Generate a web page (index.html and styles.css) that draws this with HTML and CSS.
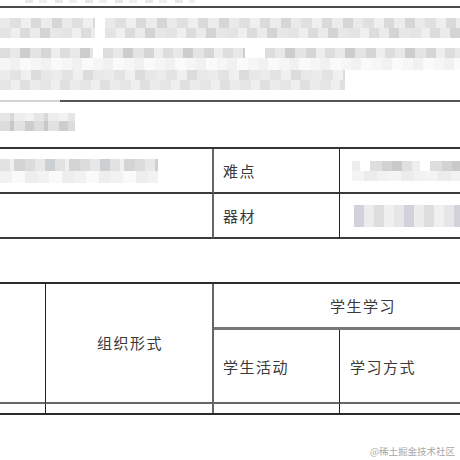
FILE: index.html
```html
<!DOCTYPE html>
<html lang="zh">
<head>
<meta charset="utf-8">
<link rel="stylesheet" href="styles.css">
</head>
<body>
<div class="page">
  <div class="faint"></div>
  <div class="topline"></div>
  <div class="para">
    <div class="bl row-a"><span class="seg s1"></span><span class="seg s2"></span></div>
    <div class="bl row-b"><span class="seg s1"></span><span class="seg s3"></span><span class="seg s4"></span></div>
    <div class="bl row-b2"></div>
    <div class="bl row-c"><span class="seg s5"></span></div>
  </div>
  <div class="rule"></div>
  <div class="short"></div>

  <div class="t1">
    <div class="c c1"><span class="blk b-left"></span></div>
    <div class="c c2"><span class="lbl">难点</span></div>
    <div class="c c3"><span class="blk b-right"></span></div>
    <div class="c c1"></div>
    <div class="c c2"><span class="lbl">器材</span></div>
    <div class="c c3"><span class="blk b-right2"></span></div>
  </div>

  <div class="t2">
    <div class="h h0"></div>
    <div class="h h1"><span class="lbl">组织形式</span></div>
    <div class="h h2"><span class="lbl">学生学习</span></div>
    <div class="h h3"><span class="lbl">学生活动</span></div>
    <div class="h h4"><span class="lbl">学习方式</span></div>
    <div class="f f0"></div>
    <div class="f f1"></div>
    <div class="f f2"></div>
    <div class="f f3"></div>
  </div>

  <div class="wm">@稀土掘金技术社区</div>
</div>
</body>
</html>
```

FILE: styles.css
```css
html, body {
  margin: 0;
  padding: 0;
  background: #fff;
  overflow: hidden;
}
.page {
  width: 460px;
  height: 460px;
  overflow: hidden;
  font-family: "Noto Sans CJK SC", "Noto Sans", sans-serif;
  color: #333;
  display: flex;
  flex-direction: column;
}
.faint {
  height: 3px;
  margin-left: 25px;
  width: 170px;
  background: repeating-linear-gradient(90deg, #e8e8e8 0 8px, #fff 8px 14px, #efefef 14px 22px, #fff 22px 30px);
}
.topline {
  margin-top: 3px;
  height: 2px;
  background: #4a4a4a;
}
.para {
  margin-top: 10px;
  display: flex;
  flex-direction: column;
}
.bl { display: flex; }
.seg { display: block; height: 100%; }
.row-a { height: 20px; }
.row-a .s1 { width: 95px; }
.row-a .s2 { width: 355px; margin-left: 10px; }
.row-b { height: 10px; margin-top: 10px; }
.row-b .s1 { width: 95px; }
.row-b .s3 { width: 145px; margin-left: 10px; }
.row-b .s4 { width: 200px; margin-left: 20px; }
.row-b2 {
  height: 12px;
  background: repeating-linear-gradient(90deg, #f6f6f6 0 10px, #f1f1f1 10px 20px, #fafafa 20px 31px);
}
.row-c { height: 20px; }
.row-c .s5 { width: 345px; }

.row-a .seg {
  background:
    repeating-linear-gradient(90deg, #eaeaea 0 10px, #e0e0e0 10px 21px, #efefef 21px 31px, #dadada 31px 41px, #ececec 41px 52px, #d6d6d6 52px 62px) top / 100% 10px no-repeat,
    repeating-linear-gradient(90deg, #e4e4e4 0 11px, #efefef 11px 20px, #dcdcdc 20px 30px, #ebebeb 30px 40px, #d4d4d4 40px 50px, #e7e7e7 50px 61px) bottom / 100% 10px no-repeat;
}
.row-b .seg {
  background: repeating-linear-gradient(90deg, #dddddd 0 10px, #e8e8e8 10px 20px, #cdcdcd 20px 30px, #e4e4e4 30px 41px, #d6d6d6 41px 51px, #eeeeee 51px 60px);
}
.row-c .seg {
  background:
    repeating-linear-gradient(90deg, #ececec 0 10px, #e3e3e3 10px 21px, #f0f0f0 21px 31px, #dcdcdc 31px 41px, #e8e8e8 41px 52px) top / 100% 10px no-repeat,
    repeating-linear-gradient(90deg, #e6e6e6 0 11px, #efefef 11px 20px, #e0e0e0 20px 30px, #ececec 30px 40px) bottom / 100% 10px no-repeat;
}
.rule {
  margin-top: 10px;
  height: 2px;
  background: linear-gradient(90deg, #d4d4d4 0 60px, #555 60px);
}
.short {
  margin-top: 11px;
  width: 75px;
  height: 18px;
  background:
    repeating-linear-gradient(90deg, #e6e6e6 0 10px, #d8d8d8 10px 14px, #ededed 14px 25px, #f2f2f2 25px 34px) top / 100% 8px no-repeat,
    repeating-linear-gradient(90deg, #dcdcdc 0 10px, #c8c8c8 10px 14px, #e2e2e2 14px 25px, #cdcdcd 25px 34px) bottom / 100% 10px no-repeat;
}

.lbl {
  font-size: 15px;
  letter-spacing: 1.5px;
  color: #3a3a3a;
  white-space: nowrap;
}

.t1 {
  margin-top: 16px;
  margin-left: -10px;
  width: 520px;
  display: grid;
  grid-template-columns: 224px 126px 170px;
  grid-template-rows: 45px 45px;
  border-top: 2px solid #333;
}
.t1 .c {
  border-bottom: 2px solid #3a3a3a;
  display: flex;
  align-items: center;
  box-sizing: border-box;
}
.t1 .c1 { border-right: 2px solid #666; }
.t1 .c2 { border-right: 1px solid #222; padding-left: 9px; }
.blk { display: block; }
.b-left {
  margin-left: 10px;
  width: 158px;
  height: 24px;
  background:
    repeating-linear-gradient(90deg, #e2e2e2 0 10px, #f0f0f0 10px 14px, #d4d4d4 14px 25px, #dcdcdc 25px 35px, #e8e8e8 35px 45px, #cdd0d3 45px 55px) top / 100% 12px no-repeat,
    repeating-linear-gradient(90deg, #f2f2f2 0 12px, #fafafa 12px 25px, #eeeeee 25px 37px) bottom / 100% 12px no-repeat;
}
.b-right {
  margin-left: 12px;
  width: 160px;
  height: 20px;
  background:
    repeating-linear-gradient(90deg, #eeeeee 0 8px, #fff 8px 18px, #dedede 18px 30px, #d2d2d2 30px 40px, #c9c9c9 40px 50px, #e0e0e0 50px 60px) top / 100% 10px no-repeat,
    repeating-linear-gradient(90deg, #f4f4f4 0 12px, #ececec 12px 25px, #f2f2f2 25px 37px) bottom / 100% 10px no-repeat;
}
.b-right2 {
  margin-left: 14px;
  width: 160px;
  height: 22px;
  background: repeating-linear-gradient(90deg, #d2d3da 0 10px, #ececec 10px 20px, #dedede 20px 30px, #f0f0f0 30px 40px, #e6e6e6 40px 50px);
}

.t2 {
  margin-top: 43px;
  margin-left: -10px;
  width: 520px;
  display: grid;
  grid-template-columns: 56px 168px 126px 170px;
  grid-template-rows: 46px 74px 9px;
  border-top: 2px solid #2a2a2a;
  border-bottom: 2px solid #2a2a2a;
}
.t2 > div {
  box-sizing: border-box;
  display: flex;
  align-items: center;
}
.h0 { grid-column: 1; grid-row: 1 / 3; border-right: 1.5px solid #222; border-bottom: 2px solid #666; }
.h1 { grid-column: 2; grid-row: 1 / 3; border-right: 2px solid #666; border-bottom: 2px solid #666; justify-content: center; }
.h1 .lbl { margin-left: 2px; padding-bottom: 2px; }
.h2 { grid-column: 3 / 5; grid-row: 1; border-bottom: 3px solid #777; justify-content: center; }
.h2 .lbl { margin-left: 2px; }
.h3 { grid-column: 3; grid-row: 2; border-right: 1px solid #222; border-bottom: 2px solid #666; padding-left: 9px; }
.h4 { grid-column: 4; grid-row: 2; border-bottom: 2px solid #666; padding-left: 10px; }
.f0 { border-right: 1.5px solid #222; }
.f1 { border-right: 2px solid #666; }
.f2 { border-right: 1px solid #222; }

.wm {
  margin-top: auto;
  margin-bottom: 2px;
  align-self: flex-end;
  margin-right: 5px;
  font-size: 9.5px;
  color: #a8a8a8;
  white-space: nowrap;
}
```
